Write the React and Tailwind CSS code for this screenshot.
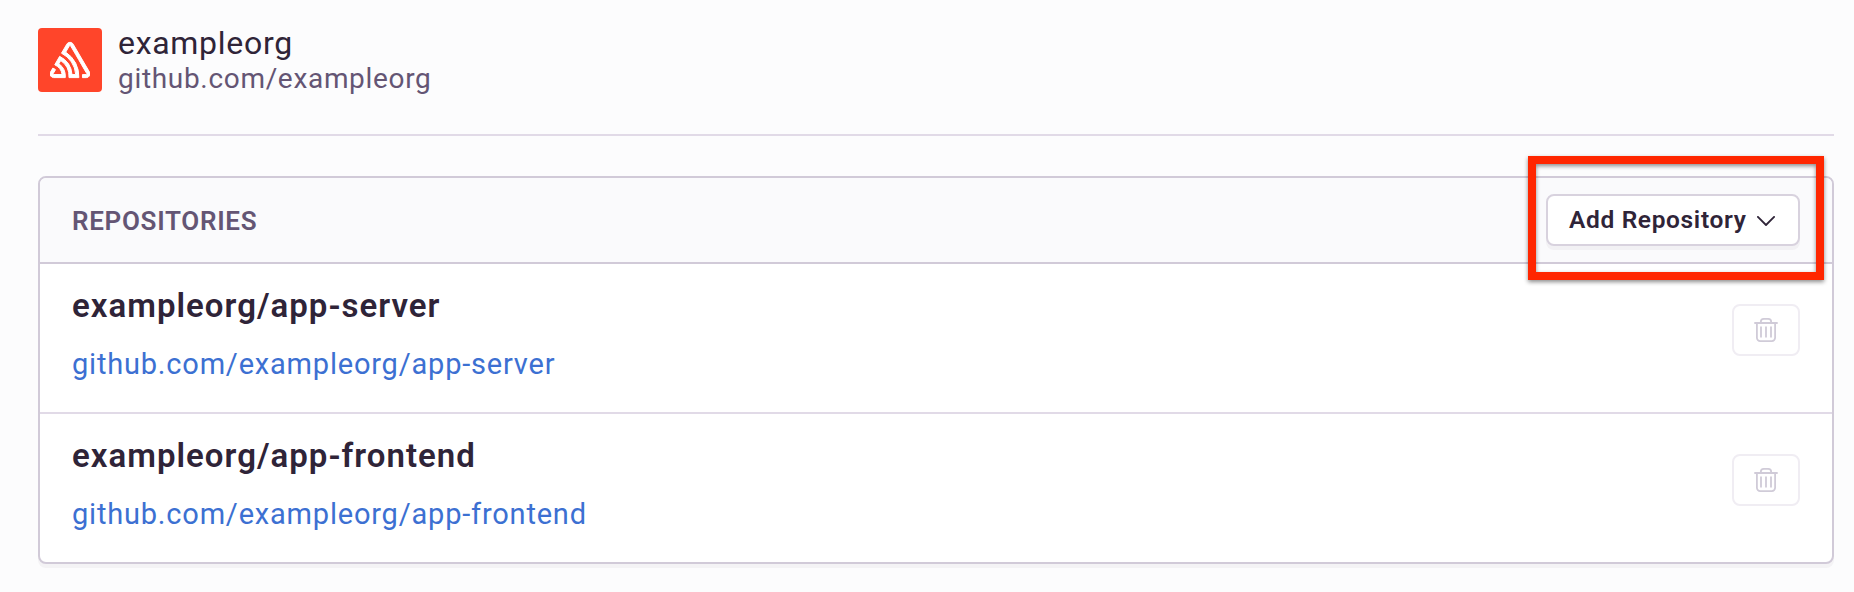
const REPOS = ["exampleorg/app-server", "exampleorg/app-frontend"];

function SentryMark() {
  return (
    <svg viewBox="0 0 24 24" className="size-10" fill="#fff" stroke="#fff" strokeWidth="0.6">
      <path d="M13.91 2.505c-.873-1.448-2.972-1.448-3.844 0L6.904 7.92a15.478 15.478 0 0 1 8.53 12.811h-2.221A13.301 13.301 0 0 0 5.784 9.814l-2.926 5.06a7.65 7.65 0 0 1 4.435 5.848H2.194a.365.365 0 0 1-.298-.534l1.413-2.402a5.16 5.16 0 0 0-1.614-.913L.296 19.275a2.182 2.182 0 0 0 .812 2.999 2.24 2.24 0 0 0 1.086.288h6.983a9.322 9.322 0 0 0-3.845-8.318l1.11-1.922a11.47 11.47 0 0 1 4.95 10.24h5.915a17.242 17.242 0 0 0-7.885-15.28l2.244-3.845a.37.37 0 0 1 .504-.13c.255.14 9.75 16.708 9.928 16.9a.365.365 0 0 1-.327.543h-2.287c.029.612.029 1.223 0 1.831h2.297a2.206 2.206 0 0 0 1.922-3.31z" />
    </svg>
  );
}

function TrashIcon() {
  return (
    <svg viewBox="0 0 24 24" className="size-6" fill="none" stroke="#d0cbd8" strokeWidth="1.8">
      <path d="M0.3 5H23.7M2.9 5V19.8A3.3 3.3 0 0 0 6.2 23.1H17.8A3.3 3.3 0 0 0 21.1 19.8V5M6.8 5V3.9A3 3 0 0 1 9.8 0.9H14.2A3 3 0 0 1 17.2 3.9V5M7 8.6V19.4M12 8.6V19.4M17 8.6V19.4" />
    </svg>
  );
}

function Chevron() {
  return (
    <svg
      viewBox="0 0 18 10"
      className="mt-0.5 h-2.5 w-[18px]"
      fill="none"
      stroke="#2f2438"
      strokeWidth="1.8"
      strokeLinecap="round"
      strokeLinejoin="round"
    >
      <path d="M0.9 0.9L9 9L17.1 0.9" />
    </svg>
  );
}

export default function App() {
  return (
    <div className="h-[592px] bg-[#fcfcfd] pt-7 pr-5 pl-[38px] font-[Roboto,sans-serif] text-[#2f2438]">
      <header className="flex h-[108px] items-start gap-4 border-b-2 border-[#e1dae7]">
        <div className="flex size-16 items-center justify-center rounded bg-[#ff452a]">
          <SentryMark />
        </div>
        <div>
          <div className="text-[32px] leading-[30px] tracking-[0.7px]">exampleorg</div>
          <div className="text-[28px] leading-[42px] tracking-[0.68px] text-[#645574]">github.com/exampleorg</div>
        </div>
      </header>
      <section className="mt-10 rounded-lg border-2 border-[#d1cad8] bg-white shadow-[0_4px_0_rgba(43,34,51,0.04)]">
        <div className="flex h-[86px] items-center justify-between rounded-t-md border-b-2 border-[#d1cad8] bg-[#fafafc] px-8">
          <h2 className="pt-0.5 text-[26px] font-semibold tracking-[0.7px] text-[#645574]">REPOSITORIES</h2>
          <div className="relative">
            <button className="flex h-[52px] w-[254px] items-center justify-between rounded-lg border-2 border-[#d8d2de] bg-white pr-[23px] pl-[21px] text-[24.5px] font-semibold tracking-[0.65px] shadow-[0_4px_0_rgba(43,34,51,0.04)]">
              Add Repository
              <Chevron />
            </button>
            <div className="pointer-events-none absolute -top-[38px] -left-[18px] h-[124px] w-[296px] border-8 border-[#ff2600] drop-shadow-[0_2px_2px_rgba(0,0,0,0.45)]" />
          </div>
        </div>
        {REPOS.map((name) => (
          <div
            key={name}
            className="flex h-[150px] items-start justify-between border-b-2 border-[#e1dae7] px-8 last:h-[148px] last:border-b-0"
          >
            <div className="pt-[22px]">
              <h3 className="text-[33px] leading-10 font-semibold tracking-[1.02px]">{name}</h3>
              <a className="mt-[18px] block text-[29px] leading-10 tracking-[0.8px] text-[#3c70d2]">github.com/{name}</a>
            </div>
            <button className="mt-10 flex h-[52px] w-[68px] items-center justify-center rounded-lg border-2 border-[#f0edf3]">
              <TrashIcon />
            </button>
          </div>
        ))}
      </section>
    </div>
  );
}
